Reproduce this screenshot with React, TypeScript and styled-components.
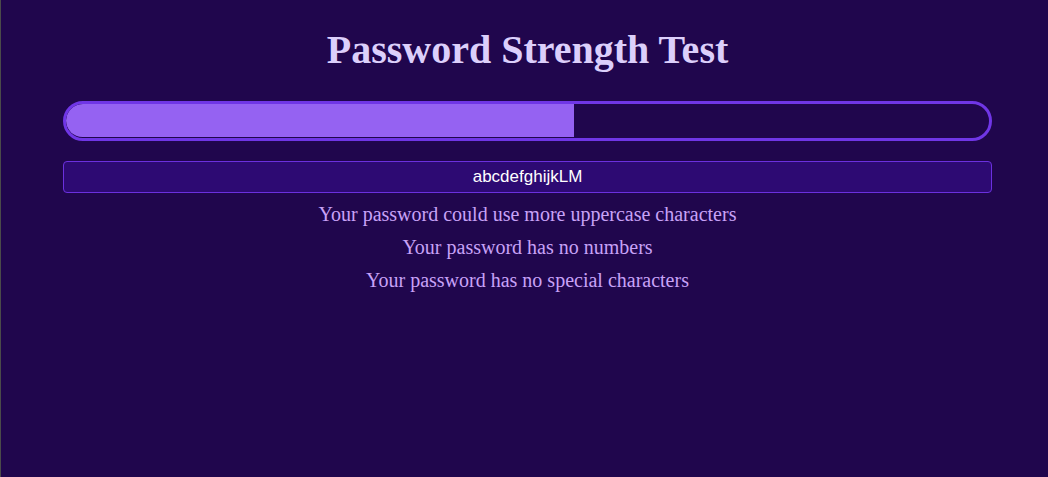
import React from "react";
import styled, { createGlobalStyle } from "styled-components";

const Global = createGlobalStyle`
  html, body { margin: 0; padding: 0; background: #20064d; }
  body { font-family: "Liberation Serif", "Times New Roman", serif; }
`;

const Page = styled.div`
  box-sizing: border-box;
  min-height: 477px;
  border-left: 1px solid #4a4a4a;
  padding: 27px 56px 0 62px;
  display: flex;
  flex-direction: column;
  align-items: stretch;
`;

const Title = styled.h1`
  margin: 0;
  font-family: "Liberation Serif", "Times New Roman", serif;
  font-size: 40px;
  font-weight: bold;
  line-height: 46px;
  color: #dccffb;
  text-align: center;
`;

const Track = styled.div`
  box-sizing: border-box;
  margin-top: 28px;
  height: 40px;
  border: 3px solid #7036e6;
  border-radius: 20px;
  overflow: hidden;
  background: #20064d;
`;

const Fill = styled.div`
  height: calc(100% - 1px);
  background: #9562f2;
  border-radius: 17px 0 0 17px;
`;

const Input = styled.input`
  box-sizing: border-box;
  margin-top: 20px;
  height: 32px;
  width: 100%;
  background: #2d0a73;
  border: 1px solid #6b30de;
  border-radius: 4px;
  color: #ffffff;
  font-family: "Liberation Sans", Arial, sans-serif;
  font-size: 17px;
  text-align: center;
  outline: none;
`;

const Messages = styled.div`
  margin-top: 10px;
  display: flex;
  flex-direction: column;
  gap: 10px;
`;

const Message = styled.p`
  margin: 0;
  font-family: "Liberation Serif", "Times New Roman", serif;
  font-size: 20px;
  line-height: 23px;
  color: #c8a2f7;
  text-align: center;
`;

const messages = [
  "Your password could use more uppercase characters",
  "Your password has no numbers",
  "Your password has no special characters",
];

export default function App() {
  const strength = 55;
  return (
    <>
      <Global />
      <Page>
        <Title>Password Strength Test</Title>
        <Track>
          <Fill style={{ width: `${strength}%` }} />
        </Track>
        <Input defaultValue="abcdefghijkLM" />
        <Messages>
          {messages.map((m) => (
            <Message key={m}>{m}</Message>
          ))}
        </Messages>
      </Page>
    </>
  );
}
